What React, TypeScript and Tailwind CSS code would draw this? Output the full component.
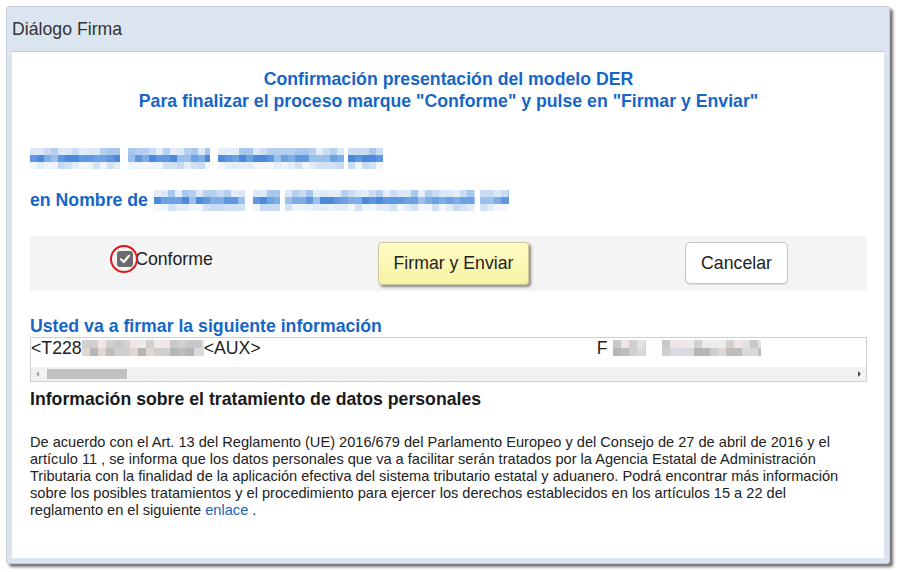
import React from "react";

const FONT = { fontFamily: '"Liberation Sans", Arial, sans-serif' };

// deterministic pseudo random so the pixelated blur stays stable
function rng(seed: number) {
  let s = seed;
  return () => {
    s = (s * 9301 + 49297) % 233280;
    return s / 233280;
  };
}

const BLUE_ROWS = [
  ["#c9dcf3", "#b4cfef", "#dbe8f8", "#a8c7ee", "#e4eefa"],
  ["#5f98de", "#7fade6", "#4a8ad9", "#9cc0ec", "#6da2e2"],
  ["#e3edf9", "#d2e2f6", "#eef4fc", "#c6dbf3", "#f3f7fd"],
];

const GRAY_ROWS = [
  ["#e2e2e2", "#d0d0d0", "#ececec", "#c8c8c8", "#f0e4e4"],
  ["#bdbdbd", "#cfcfcf", "#d9d9df", "#b6b6b6", "#e0d8d0"],
];

function Pixels({
  segments,
  rows,
  cell,
  seed,
}: {
  segments: [number, number][];
  rows: string[][];
  cell: number;
  seed: number;
}) {
  const rand = rng(seed);
  const start = segments[0][0];
  return (
    <div className="relative shrink-0" style={{ height: rows.length * cell, width: segments[segments.length - 1][1] - start }}>
      {segments.map(([a, b], si) => (
        <div key={si} className="absolute top-0 flex flex-col overflow-hidden" style={{ left: a - start, width: b - a }}>
          {rows.map((palette, ri) => (
            <div key={ri} className="flex">
              {Array.from({ length: Math.ceil((b - a) / cell) }).map((_, ci) => (
                <div
                  key={ci}
                  className="shrink-0"
                  style={{
                    width: cell,
                    height: cell,
                    background: palette[Math.floor(rand() * palette.length)],
                  }}
                />
              ))}
            </div>
          ))}
        </div>
      ))}
    </div>
  );
}

export default function App() {
  return (
    <div className="w-[900px] h-[572px] bg-white pt-[6px] pl-[6px]" style={FONT}>
      <div className="w-[884px] h-[558px] bg-[#dae5ef] border border-[#c5cfd8] rounded-[3px] shadow-[3px_3px_3px_rgba(0,0,0,0.55)] flex flex-col">
        <div className="h-[44px] flex items-center px-[5px] text-[17.7px] text-[#333]">Diálogo Firma</div>

        <div className="mx-[5px] flex-1 mb-[5px] bg-white border-t border-[#c8c8c8] pl-[18px] pr-[17px] pt-[16px]">
          <div className="text-center text-[#1766c6] font-bold text-[17.7px] leading-[22px]">
            <div>Confirmación presentación del modelo DER</div>
            <div>Para finalizar el proceso marque "Conforme" y pulse en "Firmar y Enviar"</div>
          </div>

          <div className="mt-[35px] h-[22px] flex items-center">
            <Pixels
              segments={[[30, 120], [128, 210], [218, 344], [348, 383]]}
              rows={BLUE_ROWS}
              cell={7}
              seed={7}
            />
          </div>

          <div className="mt-[20px] h-[22px] flex items-center gap-[6px]">
            <span className="text-[#1766c6] font-bold text-[17.7px]">en Nombre de</span>
            <Pixels
              segments={[[152, 243], [251, 278], [283, 473], [478, 507]]}
              rows={BLUE_ROWS}
              cell={7}
              seed={19}
            />
          </div>

          <div className="mt-[25px] h-[55px] bg-[#f4f4f4] grid grid-cols-3 items-center">
            <div className="flex justify-center -mt-[9px] -ml-[9px]">
              <label className="flex items-center text-[17.7px] text-[#222]">
                <span className="relative w-[16px] h-[16px] rounded-[3px] bg-[#6b6b6b] flex items-center justify-center">
                  <svg width="12" height="12" viewBox="0 0 12 12">
                    <path d="M2 6.3 L4.8 9 L10 2.8" stroke="white" strokeWidth="2.2" fill="none" strokeLinecap="round" strokeLinejoin="round" />
                  </svg>
                  <span className="absolute left-[-7px] top-[-6px] w-[28px] h-[28px] rounded-full border-2 border-[#e0161b]" />
                </span>
                <span className="ml-[2px]">Conforme</span>
              </label>
            </div>
            <div className="flex justify-center pl-[10px]">
              <button className="w-[151px] h-[43px] rounded-[4px] border border-[#cdc79a] bg-gradient-to-b from-[#fffdc8] to-[#f7f2a2] shadow-[2px_2px_3px_rgba(0,0,0,0.45)] text-[17.7px] text-[#222]">
                Firmar y Enviar
              </button>
            </div>
            <div className="flex justify-center pl-[18px] -mt-[1px]">
              <button className="w-[103px] h-[42px] rounded-[5px] border border-[#c4c4c4] bg-white shadow-[0_1px_1px_rgba(0,0,0,0.1)] text-[17.7px] text-[#222]">
                Cancelar
              </button>
            </div>
          </div>

          <div className="mt-[24px] text-[#1766c6] font-bold text-[17.7px] leading-[22px]">
            Usted va a firmar la siguiente información
          </div>

          <div className="h-[45px] border border-[#cfcfcf] flex flex-col">
            <div className="h-[20px] flex items-center text-[17.7px] text-[#222] whitespace-nowrap">
              <span>&lt;T228</span>
              <Pixels segments={[[81, 203]]} rows={GRAY_ROWS} cell={8} seed={3} />
              <span>&lt;AUX&gt;</span>
              <span className="ml-[336px]">F</span>
              <span className="ml-[5px]">
                <Pixels segments={[[612, 645], [661, 760]]} rows={GRAY_ROWS} cell={8} seed={11} />
              </span>
            </div>
            <div className="mt-auto h-[14px] bg-[#f1f1f1] flex items-center px-[4px]">
              <svg width="6" height="8" viewBox="0 0 6 8" className="mr-[6px]">
                <path d="M4 1 L1 4 L4 7 Z" fill="#a3a3a3" />
              </svg>
              <div className="w-[80px] h-[10px] bg-[#c1c1c1]" />
              <div className="flex-1" />
              <svg width="6" height="8" viewBox="0 0 6 8">
                <path d="M2 1 L5 4 L2 7 Z" fill="#505050" />
              </svg>
            </div>
          </div>

          <div className="mt-[6px] font-bold text-[17.7px] leading-[22px] text-[#1a1a1a]">
            Información sobre el tratamiento de datos personales
          </div>

          <p className="mt-[24px] mr-[16px] text-[14.6px] leading-[17px] text-[#222]">
            De acuerdo con el Art. 13 del Reglamento (UE) 2016/679 del Parlamento Europeo y del Consejo de 27 de abril de 2016 y el artículo 11 , se informa que los datos personales que va a facilitar serán tratados por la Agencia Estatal de Administración Tributaria con la finalidad de la aplicación efectiva del sistema tributario estatal y aduanero. Podrá encontrar más información sobre los posibles tratamientos y el procedimiento para ejercer los derechos establecidos en los artículos 15 a 22 del reglamento en el siguiente{" "}
            <a className="text-[#1f5fb5]">enlace</a> .
          </p>
        </div>
      </div>
    </div>
  );
}
